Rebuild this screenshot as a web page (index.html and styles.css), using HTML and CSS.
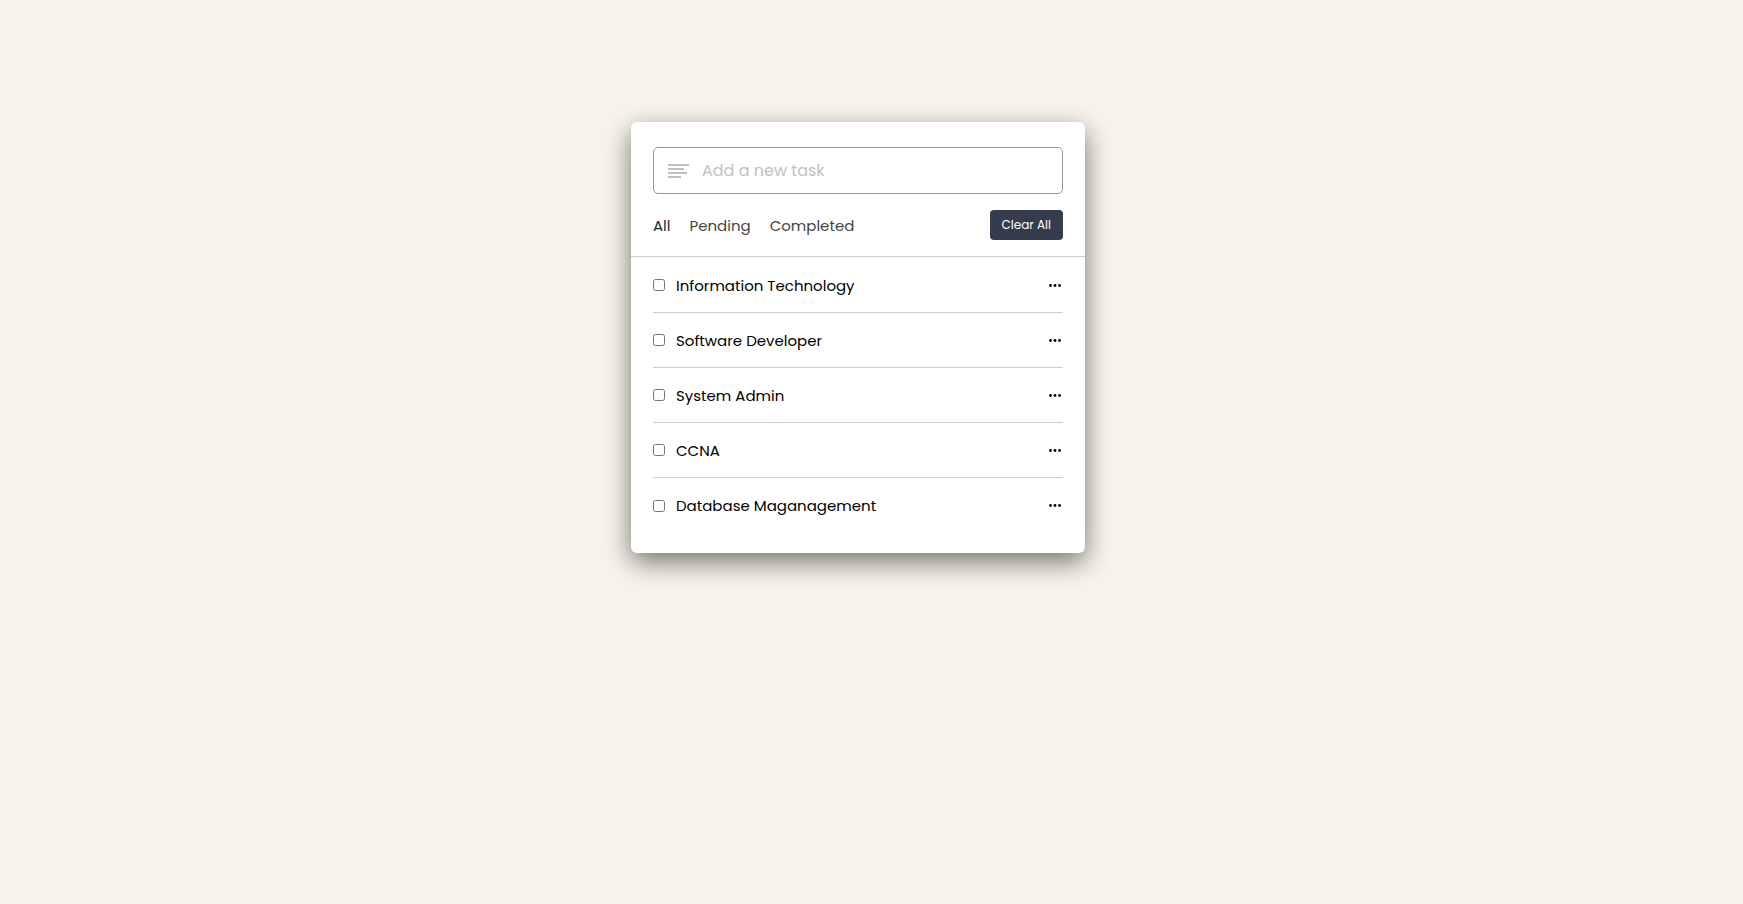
FILE: index.html
```html
<!DOCTYPE html>
<html lang="en">
<head>
<meta charset="utf-8">
<meta name="viewport" content="width=device-width, initial-scale=1">
<title>Todo List</title>
<link rel="stylesheet" href="styles.css">
</head>
<body>
<main class="wrapper">
  <label class="task-input">
    <svg class="task-icon" viewBox="0 0 21 14" aria-hidden="true">
      <path d="M0 0h21v2H0zM0 4h16v2H0zM0 8h19v2H0zM0 12h13v2H0z"/>
    </svg>
    <input class="task-field" type="text" placeholder="Add a new task" aria-label="Add a new task">
  </label>
  <div class="controls">
    <nav class="filters">
      <a class="filter active" href="#all">All</a>
      <a class="filter" href="#pending">Pending</a>
      <a class="filter" href="#completed">Completed</a>
    </nav>
    <button class="clear-btn" type="button">Clear All</button>
  </div>
  <ul class="task-box">
    <li class="task">
      <label class="task-label"><input class="check" type="checkbox"><span>Information Technology</span></label>
      <button class="more" type="button" aria-label="Options"><svg class="dots" viewBox="0 0 12 3"><circle cx="1.5" cy="1.5" r="1.4"/><circle cx="6" cy="1.5" r="1.4"/><circle cx="10.5" cy="1.5" r="1.4"/></svg></button>
    </li>
    <li class="task">
      <label class="task-label"><input class="check" type="checkbox"><span>Software Developer</span></label>
      <button class="more" type="button" aria-label="Options"><svg class="dots" viewBox="0 0 12 3"><circle cx="1.5" cy="1.5" r="1.4"/><circle cx="6" cy="1.5" r="1.4"/><circle cx="10.5" cy="1.5" r="1.4"/></svg></button>
    </li>
    <li class="task">
      <label class="task-label"><input class="check" type="checkbox"><span>System Admin</span></label>
      <button class="more" type="button" aria-label="Options"><svg class="dots" viewBox="0 0 12 3"><circle cx="1.5" cy="1.5" r="1.4"/><circle cx="6" cy="1.5" r="1.4"/><circle cx="10.5" cy="1.5" r="1.4"/></svg></button>
    </li>
    <li class="task">
      <label class="task-label"><input class="check" type="checkbox"><span>CCNA</span></label>
      <button class="more" type="button" aria-label="Options"><svg class="dots" viewBox="0 0 12 3"><circle cx="1.5" cy="1.5" r="1.4"/><circle cx="6" cy="1.5" r="1.4"/><circle cx="10.5" cy="1.5" r="1.4"/></svg></button>
    </li>
    <li class="task">
      <label class="task-label"><input class="check" type="checkbox"><span>Database Maganagement</span></label>
      <button class="more" type="button" aria-label="Options"><svg class="dots" viewBox="0 0 12 3"><circle cx="1.5" cy="1.5" r="1.4"/><circle cx="6" cy="1.5" r="1.4"/><circle cx="10.5" cy="1.5" r="1.4"/></svg></button>
    </li>
  </ul>
</main>
</body>
</html>
```
FILE: styles.css
```css
* {
  box-sizing: border-box;
}

body {
  min-height: 100vh;
  margin: 0;
  padding: 122px 27px 60px 0;
  background: #f7f4ec;
  font-family: Poppins, Inter, "Liberation Sans", sans-serif;
  font-size: 15px;
}

.wrapper {
  max-width: 454px;
  margin: 0 auto;
  padding: 25px 0 20px;
  border-radius: 6px;
  background: #fff;
  box-shadow: 0 9px 27px rgba(6, 8, 0, 0.54);
}

.task-input {
  display: flex;
  align-items: center;
  gap: 13px;
  height: 47px;
  margin: 0 22px;
  padding: 0 14px;
  border: 1px solid #999;
  border-radius: 5px;
}

.task-icon {
  width: 21px;
  height: 14px;
  fill: #c0c0c0;
}

.task-field {
  flex: 1;
  min-width: 0;
  padding: 0;
  border: 0;
  outline: 0;
  background: none;
  font: inherit;
  font-size: 16px;
}

.task-field::placeholder {
  color: #bfbfbf;
}

.controls {
  display: flex;
  align-items: center;
  justify-content: space-between;
  padding: 16px 22px;
  border-bottom: 1px solid #ccc;
}

.filters {
  display: flex;
  gap: 19px;
}

.filter {
  color: #444;
  text-decoration: none;
}

.filter.active {
  color: #1f2838;
}

.clear-btn {
  height: 30px;
  padding: 0 12px;
  border: 0;
  border-radius: 4px;
  background: #343c4e;
  color: #fff;
  font: inherit;
  font-size: 12px;
}

.task-box {
  margin: 0;
  padding: 1px 22px 0;
  list-style: none;
}

.task {
  display: flex;
  align-items: center;
  justify-content: space-between;
  min-height: 55px;
  border-bottom: 1px solid #ccc;
}

.task:last-child {
  border-bottom: 0;
}

.task-label {
  display: flex;
  align-items: center;
  gap: 11px;
  color: #000;
}

.check {
  width: 12px;
  height: 12px;
  margin: 0;
}

.more {
  display: flex;
  padding: 6px 2px;
  border: 0;
  background: none;
}

.dots {
  width: 12px;
  height: 3px;
}
```
